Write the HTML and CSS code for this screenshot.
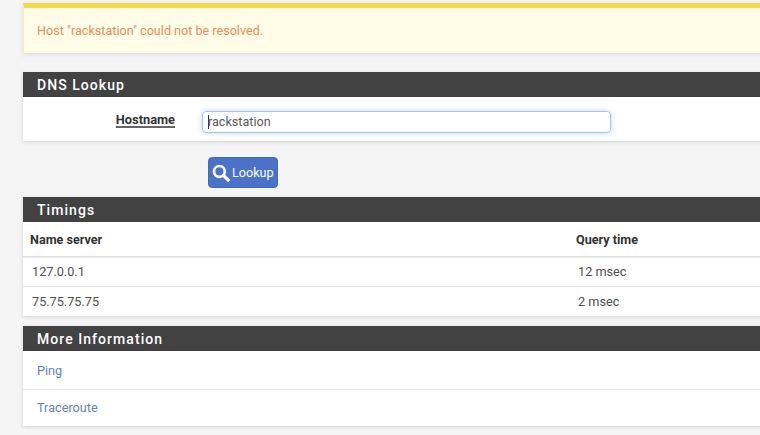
FILE: index.html
```html
<!DOCTYPE html>
<html lang="en">
<head>
<meta charset="utf-8">
<title>DNS Lookup</title>
<link rel="stylesheet" href="styles.css">
</head>
<body>
<main class="page">
  <div class="alert">Host "rackstation" could not be resolved.</div>

  <section class="panel panel-dns">
    <h2 class="panel-title">DNS Lookup</h2>
    <div class="form-row">
      <label class="form-label" for="host">Hostname</label>
      <div class="fake-input" id="host"><span class="caret"></span>rackstation</div>
    </div>
  </section>

  <div class="actions">
    <button class="btn" type="button">
      <svg class="btn-icon" viewBox="0 0 18 18" aria-hidden="true">
        <circle cx="7.4" cy="7.4" r="5.4" fill="none" stroke="#fff" stroke-width="2.7"/>
        <path d="M11.4 11.4 16.2 16.2" stroke="#fff" stroke-width="3.2" stroke-linecap="round"/>
      </svg>
      <span>Lookup</span>
    </button>
  </div>

  <section class="panel panel-timings">
    <h2 class="panel-title">Timings</h2>
    <div class="t-row t-head"><div class="c1">Name server</div><div class="c2">Query time</div></div>
    <div class="t-row t-first"><div class="c1">127.0.0.1</div><div class="c2">12 msec</div></div>
    <div class="t-row"><div class="c1">75.75.75.75</div><div class="c2">2 msec</div></div>
  </section>

  <section class="panel panel-more">
    <h2 class="panel-title">More Information</h2>
    <div class="list">
      <a class="list-item item-ping" href="#">Ping</a>
      <a class="list-item item-trace" href="#">Traceroute</a>
    </div>
  </section>
</main>
</body>
</html>
```
FILE: styles.css
```css
html, body {
  margin: 0;
  padding: 0;
  height: 100%;
  overflow: hidden;
  background: #f5f5f5;
  font-family: Roboto, "Liberation Sans", sans-serif;
  font-size: 12.7px;
  color: #505050;
}

.page {
  width: 780px;
  margin-left: 23px;
  padding-top: 3px;
}

.alert {
  box-sizing: border-box;
  height: 50px;
  padding: 0 13px;
  display: flex;
  align-items: center;
  background: #fffde8;
  border-top: 5px solid #f5d94a;
  border-left: 1px solid #f7edc0;
  color: #e78d57;
  font-size: 12.6px;
  box-shadow: 0 2px 5px rgba(0, 0, 0, 0.1);
  margin-bottom: 19px;
}

.panel {
  background: #fff;
  box-shadow: 0 1px 4px rgba(0, 0, 0, 0.14);
}

.panel-title {
  box-sizing: border-box;
  height: 25px;
  margin: 0;
  padding: 0 14px;
  display: flex;
  align-items: center;
  background: #424242;
  color: #fff;
  font-size: 14px;
  font-weight: 500;
  letter-spacing: 1.05px;
}

.form-row {
  box-sizing: border-box;
  height: 44px;
  padding-top: 14px;
  display: flex;
  align-items: flex-start;
}

.form-label {
  box-sizing: border-box;
  width: 152px;
  text-align: right;
  font-weight: 700;
  color: #333;
  font-size: 12.8px;
  text-decoration: underline;
  text-decoration-color: #666;
  text-decoration-thickness: 2px;
  text-underline-offset: 2px;
  position: relative;
  top: 1px;
}

.fake-input {
  box-sizing: border-box;
  width: 409px;
  height: 22px;
  margin-left: 27px;
  padding: 0 0 1px 5px;
  display: flex;
  align-items: center;
  border: 1px solid #a6c4ef;
  border-radius: 4px;
  box-shadow: 0 0 5px rgba(102, 160, 235, 0.45);
  font-size: 12.6px;
  color: #5a5a5a;
}

.caret {
  width: 1px;
  height: 14px;
  background: #333;
  margin-right: -1px;
}

.actions {
  padding: 16px 0 9px 185px;
  display: flex;
}

.btn {
  box-sizing: border-box;
  width: 70px;
  height: 31px;
  padding: 0 0 0 3px;
  display: flex;
  align-items: center;
  gap: 2px;
  background: #4a72c8;
  border: 1px solid #4169bd;
  border-radius: 4px;
  color: #fff;
  font-family: inherit;
  font-size: 12.6px;
}

.btn-icon {
  width: 18px;
  height: 18px;
  flex: none;
}

.t-row {
  height: 29px;
  display: flex;
  align-items: center;
  border-top: 1px solid #e6e6e6;
}

.t-first {
  border-top: 0;
}

.c1 {
  width: 546px;
  padding-left: 9px;
}

.t-head {
  height: 34px;
  border-top: 0;
  border-bottom: 1px solid #ddd;
  box-shadow: 0 1px 0 #ececec;
  font-weight: 700;
  color: #333;
  font-size: 12.6px;
}

.t-head .c1 {
  padding-left: 7px;
}

.panel-timings {
  margin-bottom: 10px;
}

.list {
  display: flex;
  flex-direction: column;
  border-radius: 0 0 4px 4px;
}

.list-item {
  display: flex;
  align-items: center;
  padding-left: 14px;
  color: #6285bb;
  text-decoration: none;
}

.item-ping {
  height: 38px;
  border-bottom: 1px solid #e8e8e8;
}

.item-trace {
  box-sizing: border-box;
  height: 36px;
  padding-bottom: 2px;
}
```
